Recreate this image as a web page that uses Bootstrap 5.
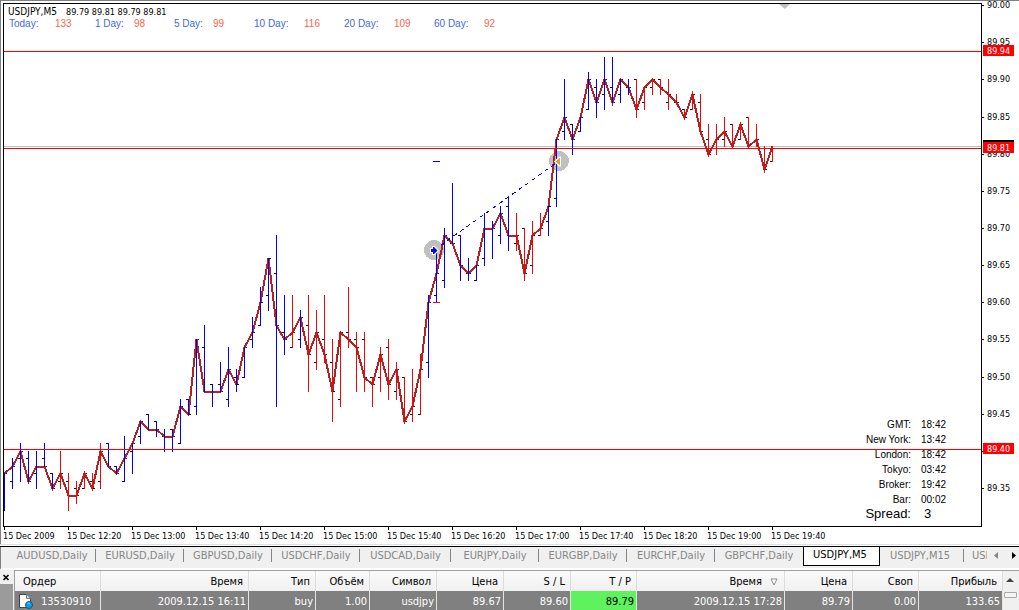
<!DOCTYPE html>
<html lang="ru">
<head>
<meta charset="utf-8">
<meta name="viewport" content="width=device-width, initial-scale=1">
<title>USDJPY,M5</title>
<link href="https://cdn.jsdelivr.net/npm/bootstrap@5.3.0/dist/css/bootstrap.min.css" rel="stylesheet">
<style>
  body { font-family: "DejaVu Sans Condensed", "DejaVu Sans", sans-serif; font-size: 11px; line-height: 14px; color: #000; background: #f0f0f0; }
  svg { display: block; }
  .chart-window { background: #fff; border-top: 1px solid #808080; border-left: 1px solid #808080; padding: 2px 0 0 2px; display: grid; grid-template-columns: minmax(0, 1fr) 37px; grid-template-rows: minmax(0, 1fr) 17px; font-size: 9px; line-height: 11px; min-height: 0; }
  .plot { border: 1px solid #000; min-height: 0; }
  .chart-window svg { width: 100%; height: 100%; font-size: 9px; }
  .plot svg, .price-axis svg { position: absolute; inset: 0; }
  .price-axis svg { overflow: visible; }
  .time-axis { min-width: 0; }
  .chart-title { padding: 2px 4px 0; white-space: pre; }
  .chart-title span { font-size: 10px; margin-right: 4px; }
  .ranges { display: grid; grid-template-columns: 46px 40px 39px 40px 39px 41px 50px 40px 50px 40px 50px 30px; padding-left: 5px; font-family: "Liberation Sans", sans-serif; font-size: 10px; color: #4169e1; }
  .ranges b { font-weight: 400; color: #ff6347; }
  .clocks { right: 0; bottom: 6px; width: 116px; font-family: "Liberation Sans", sans-serif; font-size: 10px; line-height: 15px; }
  .clocks div { display: grid; grid-template-columns: 46px 1fr; column-gap: 10px; }
  .clocks span:first-child { text-align: right; white-space: nowrap; display: flex; justify-content: flex-end; }
  .clocks .spread { font-size: 13px; line-height: 13px; column-gap: 13px; }

  .tabs { height: 23px; background: #f0f0f0; border-left: 1px solid #808080; border-bottom: 2px solid #fff; }
  .tabs-rule { height: 3px; background: #fff; border-top: 1px solid #dcdfe3; border-bottom: 1px solid #000; }
  .tabs button { border: 0; background: none; padding: 0; color: #868686; line-height: 16px; white-space: nowrap; }
  .tabs-list { min-width: 0; padding-left: 7px; height: 20px; }
  .sheet { width: 88px; flex: none; position: relative; height: 17px; }
  .sheet-wide { width: 91px; }
  .sheet::after { content: ""; position: absolute; right: 0; top: 2px; width: 1px; height: 13px; background: #868686; }
  .sheet-last::after { display: none; }
  .tabs .sheet-active { width: 77px; height: 20px; margin-top: -1px; background: #fff; color: #000; border: 1px solid #000; border-top: 0; padding: 1px 3px 2px 0; }
  .sheet-active::after { display: none; }
  .tabs .sheet-m15 { width: 84px; padding-right: 4px; }
  .scroller { width: 32px; height: 17px; flex: none; padding: 0 3px 0 7px; }

  .dock { width: 14px; background: #f0f0f0; }
  .dock button { border: 0; background: none; padding: 1px 0 0 2px; height: 14px; width: 13px; }
  .dock-grip { background: #9b9b9b; margin-right: 1px; }
  .orders { min-width: 0; border-top: 1px solid #a0a0a0; border-left: 1px solid #a0a0a0; }
  .orders table { table-layout: fixed; width: 100%; border-collapse: separate; border-spacing: 0; }
  .orders th { height: 20px; padding: 1px 5px 0 8px; font-weight: 400; text-align: right; background: linear-gradient(#fafafa, #f0f0f0); border-right: 1px solid #dcdcdc; white-space: nowrap; }
  .orders td { height: 19px; padding: 2px 2px 0 4px; text-align: right; color: #fff; background: #808080; border-right: 1px solid #e4e4e4; white-space: nowrap; }
  .orders th:first-child, .orders td:first-child { text-align: left; }
  .orders .hit { background: #5ff25f; color: #000; }
  .vbar { width: 16px; border-top: 1px solid #a0a0a0; background: #f0f0f0; }
  .vbar button { border: 0; background: none; padding: 0 0 0 3px; height: 17px; width: 16px; }
  .thumb { height: 6px; margin: 0 2px 0 1px; border: 1px solid #a8a8a8; background: #f4f4f4; border-radius: 1px; }
</style>
</head>
<body class="vh-100 d-flex flex-column overflow-hidden">

<main class="chart-window flex-grow-1">
  <section class="plot position-relative overflow-hidden">
    <svg id="plot" aria-label="USDJPY M5"></svg>
    <div class="position-relative">
      <div class="chart-title"><span>USDJPY,M5</span>  89.79 89.81 89.79 89.81</div>
      <div class="ranges"><span>Today:</span><b>133</b><span>1 Day:</span><b>98</b><span>5 Day:</span><b>99</b><span>10 Day:</span><b>116</b><span>20 Day:</span><b>109</b><span>60 Day:</span><b>92</b></div>
    </div>
    <div class="clocks position-absolute">
      <div><span>GMT:</span><span>18:42</span></div>
      <div><span>New York:</span><span>13:42</span></div>
      <div><span>London:</span><span>18:42</span></div>
      <div><span>Tokyo:</span><span>03:42</span></div>
      <div><span>Broker:</span><span>19:42</span></div>
      <div><span>Bar:</span><span>00:02</span></div>
      <div class="spread"><span>Spread:</span><span>3</span></div>
    </div>
  </section>
  <aside class="price-axis position-relative"><svg id="prices"></svg></aside>
  <div class="time-axis"><svg id="times"></svg></div>
</main>

<div class="tabs-rule flex-shrink-0"></div>
<nav class="tabs d-flex flex-shrink-0">
  <div class="tabs-list d-flex flex-grow-1 overflow-hidden">
    <button class="sheet">AUDUSD,Daily</button>
    <button class="sheet">EURUSD,Daily</button>
    <button class="sheet">GBPUSD,Daily</button>
    <button class="sheet">USDCHF,Daily</button>
    <button class="sheet sheet-wide">USDCAD,Daily</button>
    <button class="sheet">EURJPY,Daily</button>
    <button class="sheet">EURGBP,Daily</button>
    <button class="sheet">EURCHF,Daily</button>
    <button class="sheet sheet-last">GBPCHF,Daily</button>
    <button class="sheet sheet-active">USDJPY,M5</button>
    <button class="sheet sheet-m15">USDJPY,M15</button>
    <button class="sheet sheet-last text-start ps-2">USDJPY,H1</button>
  </div>
  <div class="scroller d-flex justify-content-between align-items-center">
    <button aria-label="Назад"><svg width="4" height="7"><path d="M4 0v7L0 3.5z" fill="#868686"/></svg></button>
    <button aria-label="Вперёд"><svg width="4" height="7"><path d="M0 0v7l4-3.500z" fill="#000"/></svg></button>
  </div>
</nav>

<section class="d-flex flex-shrink-0">
  <div class="dock d-flex flex-column flex-shrink-0">
    <button aria-label="Закрыть"><svg width="9" height="8" viewBox="0 0 9 8"><path d="M1.500 1l5 5M6.500 1l-5 5" stroke="#000" stroke-width="1.600"/></svg></button>
    <div class="dock-grip flex-grow-1"></div>
  </div>
  <div class="orders flex-grow-1">
    <table>
      <colgroup><col style="width:86px"><col style="width:148px"><col style="width:67px"><col style="width:54px"><col style="width:67px"><col style="width:67px"><col style="width:67px"><col style="width:66px"><col style="width:148px"><col style="width:68px"><col style="width:66px"><col></colgroup>
      <thead><tr><th>Ордер</th><th>Время</th><th>Тип</th><th>Объём</th><th>Символ</th><th>Цена</th><th>S / L</th><th>T / P</th>
        <th><span class="d-inline-flex align-items-center">Время<svg class="ms-2" width="9" height="8"><path d="M1 1h6L4 7z" fill="#fff" stroke="#8a8a8a"/></svg></span></th><th>Цена</th><th>Своп</th><th>Прибыль</th></tr></thead>
      <tbody><tr>
        <td><span class="d-flex align-items-center"><svg class="me-2" width="14" height="15" viewBox="0 0 14 15"><path d="M.5.5h7l4 4v9H.5z" fill="#fff" stroke="#444"/><path d="M7.500.5v4h4" fill="#ddd" stroke="#777"/><circle cx="10" cy="11" r="3.500" fill="#149ae0" stroke="#075b96"/><path d="M8.500 10q1-1.500 2.500-.5" stroke="#8fdcff" fill="none"/></svg>13530910</span></td>
        <td>2009.12.15 16:11</td><td>buy</td><td>1.00</td><td>usdjpy</td><td>89.67</td><td>89.60</td><td class="hit">89.79</td><td>2009.12.15 17:28</td><td>89.79</td><td>0.00</td><td>133.65</td>
      </tr></tbody>
    </table>
  </div>
  <div class="vbar flex-shrink-0">
    <button aria-label="Вверх"><svg width="8" height="6"><path d="M0 5l4-4 4 4z" fill="#444"/></svg></button>
    <div class="thumb"></div>
  </div>
</section>

<script src="https://cdn.jsdelivr.net/npm/bootstrap@5.3.0/dist/js/bootstrap.bundle.min.js"></script>
<script>
// Five-minute bars as open, high, low, close in hundredths above 89.00
const bars = [
[32,37,32,37],[36,39,35,38],[39,41,36,40],[39,40,36,36],[37,40,35,38],[39,41,38,38],[37,37,35,35],[36,40,35,37],[36,37,32,34],[35,36,33,34],
[35,37,35,37],[36,37,35,35],[36,41,35,40],[41,41,38,38],[38,38,37,37],[36,42,36,39],[40,41,37,41],[42,44,41,44],[45,45,43,43],[44,44,42,43],
[42,43,40,42],[43,43,40,42],[41,47,41,46],[47,47,45,45],[46,55,45,55],[54,57,48,48],[49,49,46,48],[49,52,48,48],[47,54,46,51],[50,51,48,49],
[50,54,50,54],[55,58,54,56],[57,62,57,60],[61,66,59,66],[64,69,46,57],[56,61,53,55],[54,61,54,56],[55,59,54,58],[57,61,48,53],[52,59,51,56],
[55,61,52,53],[52,55,44,48],[47,56,46,56],[56,62,54,55],[55,56,48,54],[55,56,48,50],[50,50,46,49],[50,54,48,53],[54,55,47,49],[48,52,47,51],
[50,50,44,44],[45,51,44,46],[45,53,45,51],[52,61,50,60],[61,67,60,64],[63,70,62,69],[68,76,68,68],[69,69,63,65],[64,66,63,64],[63,65,63,65],
[66,72,65,70],[70,71,66,70],[69,73,68,72],[73,74,67,69],[68,72,67,69],[70,70,63,64],[65,71,64,69],[69,72,69,70],[71,73,69,73],[74,82,73,82],
[83,90,82,85],[84,84,80,82],[83,85,83,85],[86,91,86,90],[89,90,85,87],[88,93,86,90],[89,93,87,87],[88,90,87,90],[89,90,88,89],[90,90,85,86],
[87,89,86,89],[89,90,88,90],[90,90,88,89],[87,90,86,88],[87,88,87,87],[86,86,85,85],[86,88,86,88],[87,88,83,83],[82,84,80,80],[81,84,80,82],
[82,85,81,83],[84,84,81,81],[82,84,82,84],[85,85,81,81],[81,84,81,82],[81,81,78,78],[79,81,79,81]];
const isRed = i => (i >= 7 && i <= 12) || i === 36 || (i >= 38 && i <= 52) || (i >= 64 && i <= 67) || i >= 79;
const STEP = 8, Y = p => Math.round(484 - (p - 35) * 7.43);

let ticks = '', blue = '', red = '';
const closes = [];
bars.forEach(([o, h, l, c], i) => {
  const x = i * STEP;
  ticks += `M${x - 2} ${Y(o)}h2v1h-2zM${x + 1} ${Y(c)}h2v1h-2z`;
  const stem = `M${x} ${Y(h)}h1V${Y(l) + 1}h-1z`;
  isRed(i) ? red += stem : blue += stem;
  closes.push(`${x + .5},${Y(c) + .5}`);
});
document.getElementById('plot').innerHTML = `
  <path d="M775 0h11l-5 5z" fill="#c0c0c0"/>
  <g shape-rendering="crispEdges">
    <circle cx="430" cy="246" r="10" fill="#c0c0c0"/><circle cx="555" cy="157" r="10" fill="#c0c0c0"/>
    <path d="${ticks}"/>
    <rect y="142" width="100%" height="1" fill="#c0c0c0"/>
    <polyline points="${closes.join(' ')}" fill="none" stroke="#b22222" stroke-width="2"/>
    <path d="${blue}" fill="#00f"/><path d="${red}" fill="#f00"/>
    <g fill="#f00"><rect y="47" width="100%" height="1"/><rect y="144" width="100%" height="1"/><rect y="445" width="100%" height="1"/></g>
    <path d="M430 246L555 157" stroke="#00f" stroke-dasharray="4 4"/>
    <rect x="429" y="157" width="7" height="1" fill="#00f"/><rect x="429" y="298" width="7" height="1" fill="#f00"/>
  </g>
  <path d="M426 244h2v-2h3l4 4.500-4 4.500h-3v-2h-2z" fill="#fff"/><path d="M427 245h2v-2h1l3.500 3.500-3.500 3.500h-1v-2h-2z" fill="#00f"/>
  <path d="M550 157.500l5-5h2v10h-2z" fill="#fff"/><path d="M551.500 157.500l4.500-4v8z" fill="#daa520"/>`;

// The price axis shares the plot's vertical scale, one pixel lower for the frame
let axis = '';
for (let p = 100; p >= 35; p -= 5) {
  const y = Y(p) + 1;
  axis += `<rect y="${y}" width="2" height="1"/><text x="5" y="${y + 3}">${p === 100 ? '90.00' : '89.' + p}</text>`;
}
axis += '<rect x="1" y="137" width="31" height="3"/>';
[[42, '89.94'], [139, '89.81'], [440, '89.40']].forEach(([y, t]) => {
  axis += `<rect x="1" y="${y}" width="31" height="11" fill="#f00"/><text x="5" y="${y + 9}" fill="#fff">${t}</text>`;
});
document.getElementById('prices').innerHTML = axis;

const hours = ['2009','12:20','13:00','13:40','14:20','15:00','15:40','16:20','17:00','17:40','18:20','19:00','19:40'];
document.getElementById('times').innerHTML = hours.map((t, i) =>
  `<rect x="${i * 64 + 1}" width="1" height="3"/><text x="${i * 64}" y="12">15 Dec ${t}</text>`).join('');
</script>
</body>
</html>
